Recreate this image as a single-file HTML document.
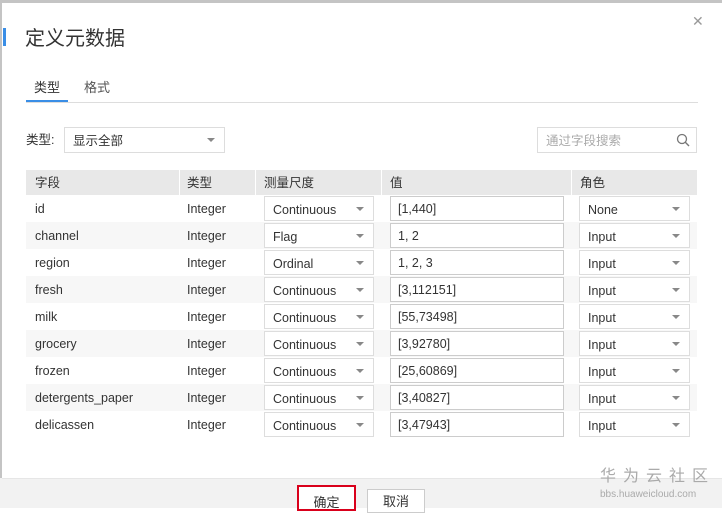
<!DOCTYPE html>
<html><head><meta charset="utf-8"><style>
*{margin:0;padding:0;box-sizing:border-box}
body{width:722px;height:508px;overflow:hidden;background:#fff;font-family:"Liberation Sans","Noto Sans CJK SC",sans-serif;color:#333;position:relative;line-height:1}
.a{position:absolute;white-space:nowrap;line-height:1}
.sel{position:absolute;height:25px;border:1px solid #ddd;background:#fff;font-size:12.5px;padding:6px 0 0 8px;line-height:1}
.sel:after{content:"";position:absolute;right:9px;top:10px;border-left:4px solid transparent;border-right:4px solid transparent;border-top:4px solid #888}
.inp{position:absolute;height:25px;border:1px solid #ccc;background:#fff;font-size:12.5px;padding:6px 0 0 7px;line-height:1}
.cell{position:absolute;font-size:12.5px;line-height:1;white-space:nowrap}
</style></head><body>
<div class="a" style="left:0;top:0;width:722px;height:3px;background:#c4c4c4"></div>
<div class="a" style="left:0;top:0;width:2px;height:508px;background:#c4c4c4"></div>
<div class="a" style="left:3px;top:28px;width:3px;height:18px;background:#3a8ee6"></div>
<div class="a" style="left:25px;top:29px;font-size:20px;color:#333">定义元数据</div>
<div class="a" style="left:692px;top:14px;font-size:14px;color:#999">✕</div>
<div class="a" style="left:34px;top:81px;font-size:13px;color:#333">类型</div>
<div class="a" style="left:84px;top:81px;font-size:13px;color:#555">格式</div>
<div class="a" style="left:26px;top:102px;width:672px;height:1px;background:#ddd"></div>
<div class="a" style="left:26px;top:100px;width:42px;height:2px;background:#3a8ee6"></div>
<div class="a" style="left:26px;top:134px;font-size:12.5px">类型:</div>
<div class="sel" style="left:64px;top:127px;width:161px;height:26px;padding-top:7px">显示全部</div>
<div class="a" style="left:537px;top:127px;width:160px;height:26px;border:1px solid #ddd;font-size:12.5px;color:#aaa;padding:7px 0 0 8px">通过字段搜索
<svg style="position:absolute;right:6px;top:5px" width="14" height="14" viewBox="0 0 14 14"><circle cx="6" cy="6" r="4.5" fill="none" stroke="#777" stroke-width="1.3"/><path d="M9.3 9.3L13 13" stroke="#777" stroke-width="1.4"/></svg></div>
<div class="a" style="left:26px;top:170px;width:671px;height:25px;background:#e8e8e8"></div>
<div class="a" style="left:179px;top:170px;width:1px;height:25px;background:#fff"></div>
<div class="a" style="left:255px;top:170px;width:1px;height:25px;background:#fff"></div>
<div class="a" style="left:381px;top:170px;width:1px;height:25px;background:#fff"></div>
<div class="a" style="left:571px;top:170px;width:1px;height:25px;background:#fff"></div>
<div class="cell" style="left:35px;top:177px">字段</div>
<div class="cell" style="left:187px;top:177px">类型</div>
<div class="cell" style="left:264px;top:177px">测量尺度</div>
<div class="cell" style="left:390px;top:177px">值</div>
<div class="cell" style="left:580px;top:177px">角色</div>
<div id="rows"></div>
<script>
var d=[["id","Continuous","[1,440]","None"],["channel","Flag","1, 2","Input"],["region","Ordinal","1, 2, 3","Input"],["fresh","Continuous","[3,112151]","Input"],["milk","Continuous","[55,73498]","Input"],["grocery","Continuous","[3,92780]","Input"],["frozen","Continuous","[25,60869]","Input"],["detergents_paper","Continuous","[3,40827]","Input"],["delicassen","Continuous","[3,47943]","Input"]];
var h="";d.forEach(function(r,i){var y=195+i*27;
if(i%2)h+='<div class="a" style="left:26px;top:'+y+'px;width:671px;height:27px;background:#f7f7f7"></div>';
h+='<div class="cell" style="left:35px;top:'+(y+8)+'px">'+r[0]+'</div><div class="cell" style="left:187px;top:'+(y+8)+'px">Integer</div>';
h+='<div class="sel" style="left:264px;top:'+(y+1)+'px;width:110px;padding-top:7px">'+r[1]+'</div>';
h+='<div class="inp" style="left:390px;top:'+(y+1)+'px;width:174px">'+r[2]+'</div>';
h+='<div class="sel" style="left:579px;top:'+(y+1)+'px;width:111px;padding-top:7px">'+r[3]+'</div>';});
document.getElementById("rows").innerHTML=h;
</script>
<div class="a" style="left:0;top:478px;width:722px;height:30px;background:#f2f2f2"></div>
<div class="a" style="left:2px;top:478px;width:720px;height:1px;background:#e6e6e6"></div>
<div class="a" style="left:297px;top:485px;width:59px;height:26px;border:2px solid #d9001b;background:#fff;font-size:13px;text-align:center;padding-top:9px">确定</div>
<div class="a" style="left:367px;top:489px;width:58px;height:24px;border:1px solid #ccc;background:#fff;font-size:13px;text-align:center;padding-top:5px">取消</div>
<div class="a" style="left:600px;top:469px;font-size:16px;color:#aaa;letter-spacing:7px">华为云社区</div>
<div class="a" style="left:600px;top:490px;font-size:10px;color:#aaa">bbs.huaweicloud.com</div>
</body></html>
